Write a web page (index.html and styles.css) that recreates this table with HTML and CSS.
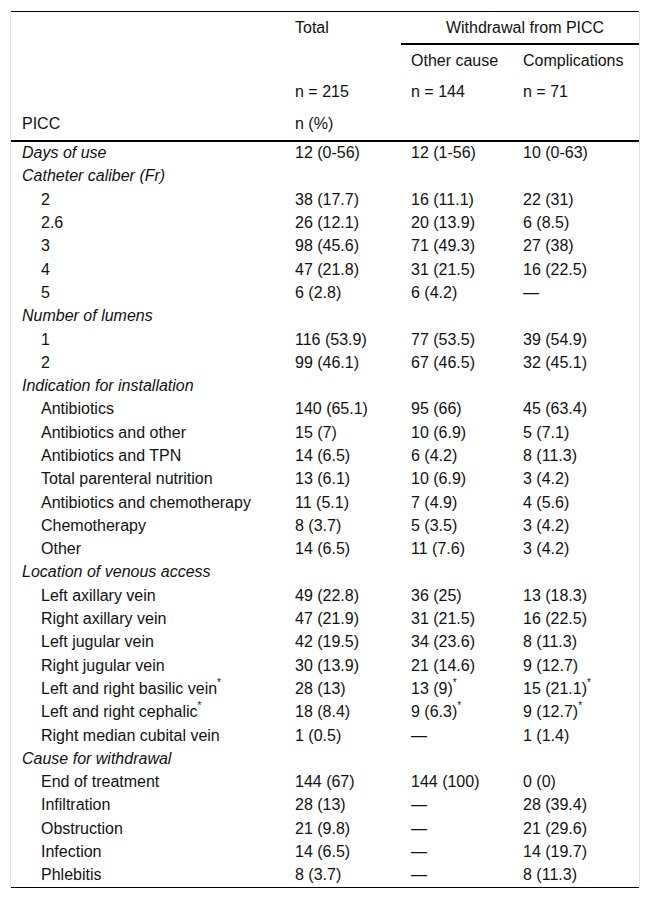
FILE: index.html
```html
<!DOCTYPE html>
<html>
<head>
<meta charset="utf-8">
<link rel="stylesheet" href="styles.css">
</head>
<body>
<div class="frame">
<table class="data">
<colgroup><col class="c1"><col class="c2"><col class="c3"><col class="c4"></colgroup>
<thead>
<tr><th></th><th>Total</th><th colspan="2" class="group">Withdrawal from PICC</th></tr>
<tr><th></th><th></th><th>Other cause</th><th>Complications</th></tr>
<tr><th></th><th>n = 215</th><th>n = 144</th><th>n = 71</th></tr>
<tr class="last"><th>PICC</th><th>n (%)</th><th></th><th></th></tr>
</thead>
<tbody>
<tr><td class="cat">Days of use</td><td>12 (0-56)</td><td>12 (1-56)</td><td>10 (0-63)</td></tr>
<tr><td class="cat">Catheter caliber (Fr)</td><td></td><td></td><td></td></tr>
<tr><td class="sub">2</td><td>38 (17.7)</td><td>16 (11.1)</td><td>22 (31)</td></tr>
<tr><td class="sub">2.6</td><td>26 (12.1)</td><td>20 (13.9)</td><td>6 (8.5)</td></tr>
<tr><td class="sub">3</td><td>98 (45.6)</td><td>71 (49.3)</td><td>27 (38)</td></tr>
<tr><td class="sub">4</td><td>47 (21.8)</td><td>31 (21.5)</td><td>16 (22.5)</td></tr>
<tr><td class="sub">5</td><td>6 (2.8)</td><td>6 (4.2)</td><td>—</td></tr>
<tr><td class="cat">Number of lumens</td><td></td><td></td><td></td></tr>
<tr><td class="sub">1</td><td>116 (53.9)</td><td>77 (53.5)</td><td>39 (54.9)</td></tr>
<tr><td class="sub">2</td><td>99 (46.1)</td><td>67 (46.5)</td><td>32 (45.1)</td></tr>
<tr><td class="cat">Indication for installation</td><td></td><td></td><td></td></tr>
<tr><td class="sub">Antibiotics</td><td>140 (65.1)</td><td>95 (66)</td><td>45 (63.4)</td></tr>
<tr><td class="sub">Antibiotics and other</td><td>15 (7)</td><td>10 (6.9)</td><td>5 (7.1)</td></tr>
<tr><td class="sub">Antibiotics and TPN</td><td>14 (6.5)</td><td>6 (4.2)</td><td>8 (11.3)</td></tr>
<tr><td class="sub">Total parenteral nutrition</td><td>13 (6.1)</td><td>10 (6.9)</td><td>3 (4.2)</td></tr>
<tr><td class="sub">Antibiotics and chemotherapy</td><td>11 (5.1)</td><td>7 (4.9)</td><td>4 (5.6)</td></tr>
<tr><td class="sub">Chemotherapy</td><td>8 (3.7)</td><td>5 (3.5)</td><td>3 (4.2)</td></tr>
<tr><td class="sub">Other</td><td>14 (6.5)</td><td>11 (7.6)</td><td>3 (4.2)</td></tr>
<tr><td class="cat">Location of venous access</td><td></td><td></td><td></td></tr>
<tr><td class="sub">Left axillary vein</td><td>49 (22.8)</td><td>36 (25)</td><td>13 (18.3)</td></tr>
<tr><td class="sub">Right axillary vein</td><td>47 (21.9)</td><td>31 (21.5)</td><td>16 (22.5)</td></tr>
<tr><td class="sub">Left jugular vein</td><td>42 (19.5)</td><td>34 (23.6)</td><td>8 (11.3)</td></tr>
<tr><td class="sub">Right jugular vein</td><td>30 (13.9)</td><td>21 (14.6)</td><td>9 (12.7)</td></tr>
<tr><td class="sub">Left and right basilic vein<sup>*</sup></td><td>28 (13)</td><td>13 (9)<sup>*</sup></td><td>15 (21.1)<sup>*</sup></td></tr>
<tr><td class="sub">Left and right cephalic<sup>*</sup></td><td>18 (8.4)</td><td>9 (6.3)<sup>*</sup></td><td>9 (12.7)<sup>*</sup></td></tr>
<tr><td class="sub">Right median cubital vein</td><td>1 (0.5)</td><td>—</td><td>1 (1.4)</td></tr>
<tr><td class="cat">Cause for withdrawal</td><td></td><td></td><td></td></tr>
<tr><td class="sub">End of treatment</td><td>144 (67)</td><td>144 (100)</td><td>0 (0)</td></tr>
<tr><td class="sub">Infiltration</td><td>28 (13)</td><td>—</td><td>28 (39.4)</td></tr>
<tr><td class="sub">Obstruction</td><td>21 (9.8)</td><td>—</td><td>21 (29.6)</td></tr>
<tr><td class="sub">Infection</td><td>14 (6.5)</td><td>—</td><td>14 (19.7)</td></tr>
<tr><td class="sub">Phlebitis</td><td>8 (3.7)</td><td>—</td><td>8 (11.3)</td></tr>
</tbody>
</table>
</div>
</body>
</html>
```
FILE: styles.css
```css
html, body {
  margin: 0;
  padding: 0;
  background: #fff;
}
body {
  font-family: "Liberation Sans", Arial, sans-serif;
  font-size: 16px;
  color: #111;
}
.frame {
  margin: 11px 10px 0 10px;
  border-left: 1px solid #e2e2e2;
  border-right: 1px solid #e2e2e2;
  width: 628px;
}
.data {
  width: 628px;
  table-layout: fixed;
  border-collapse: collapse;
  border-top: 1px solid #000;
  border-bottom: 1px solid #000;
}
.c1 { width: 274px; }
.c2 { width: 116px; }
.c3 { width: 112px; }
.c4 { width: 126px; }
th {
  font-weight: normal;
  text-align: left;
  padding: 6.5px 0 6.5px 10px;
  line-height: 18.4px;
  white-space: nowrap;
}
th.group {
  text-align: center;
  border-bottom: 2px solid #000;
}
tr.last th {
  border-bottom: 2px solid #000;
}
tr.last th:first-child {
  padding-left: 11px;
}
td {
  padding: 2.5px 0 2.5px 10px;
  line-height: 18.3px;
  white-space: nowrap;
}
td.cat {
  font-style: italic;
  padding-left: 11px;
}
td.sub {
  padding-left: 30px;
}
sup {
  font-size: 10px;
  line-height: 0;
  vertical-align: 0;
  position: relative;
  top: -8px;
}
```
